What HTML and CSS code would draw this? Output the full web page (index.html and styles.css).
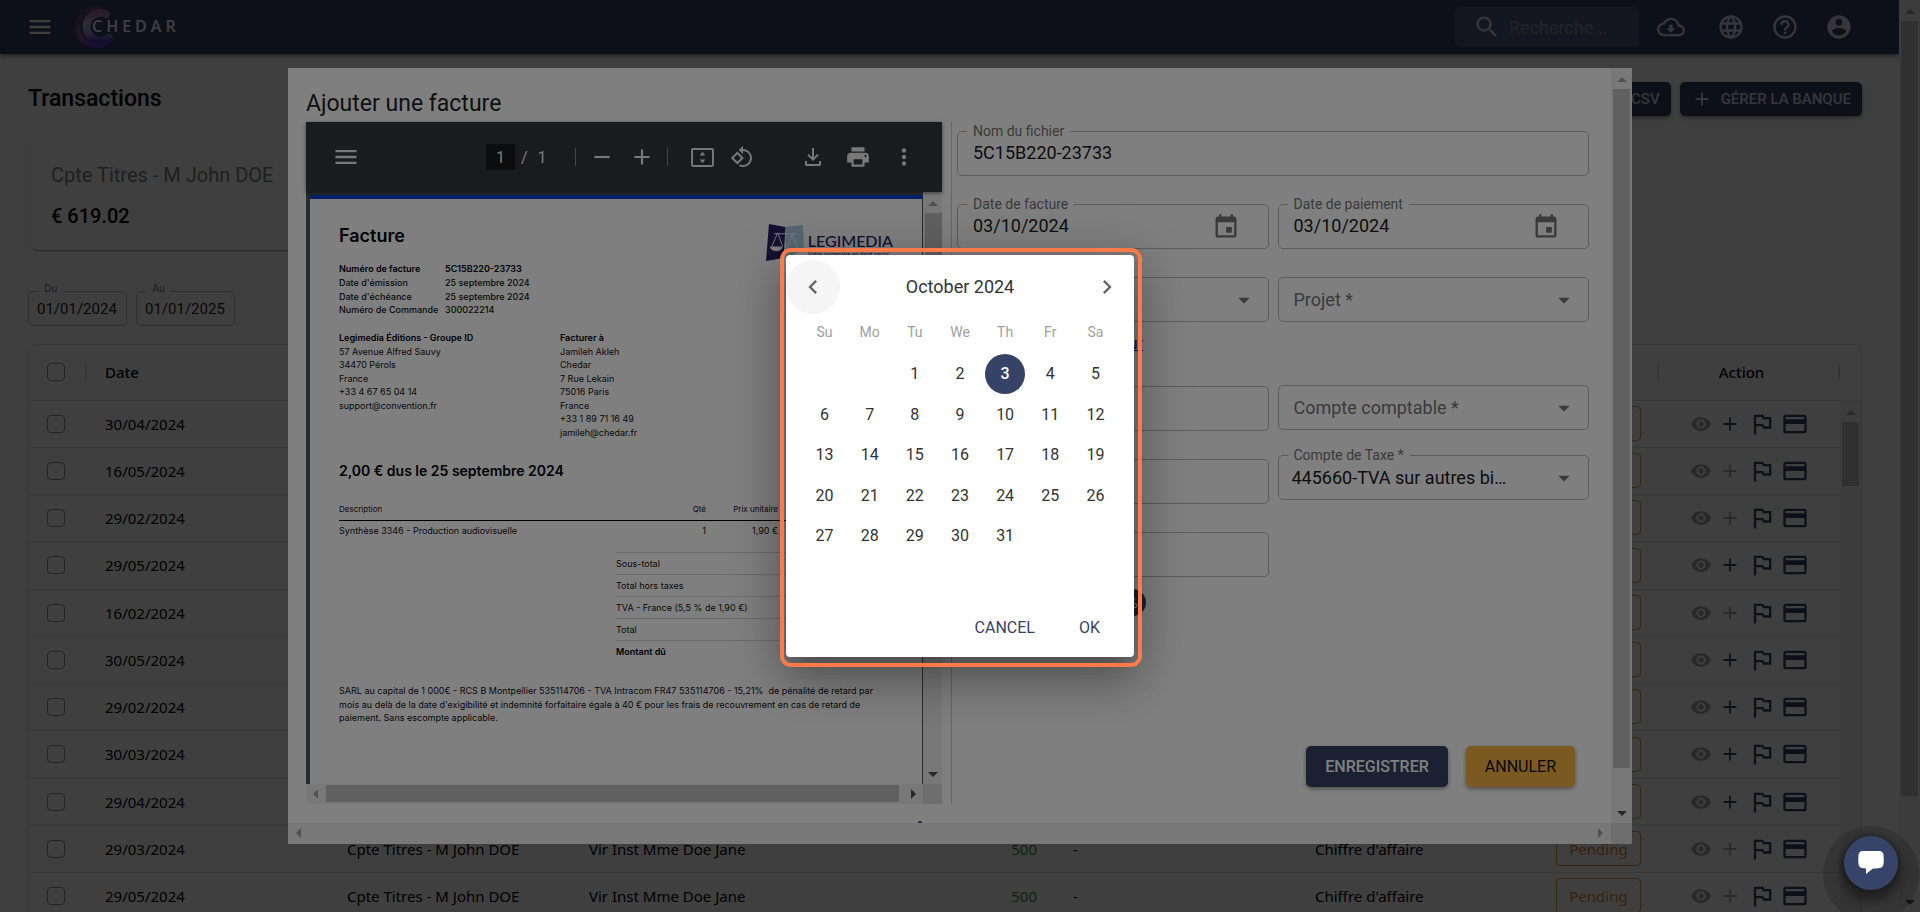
FILE: index.html
```html
<!DOCTYPE html>
<html lang="fr">
<head>
<meta charset="utf-8">
<title>Chedar - Transactions</title>
<link rel="stylesheet" href="styles.css">
</head>
<body>
<svg class="sprite" aria-hidden="true">
  <symbol id="i-menu" viewBox="0 0 24 24"><path d="M3 18h18v-2H3v2zm0-5h18v-2H3v2zm0-7v2h18V6H3z"/></symbol>
  <symbol id="i-search" viewBox="0 0 24 24"><path d="M15.5 14h-.79l-.28-.27C15.41 12.59 16 11.11 16 9.5 16 5.91 13.09 3 9.5 3S3 5.91 3 9.5 5.91 16 9.5 16c1.61 0 3.09-.59 4.23-1.57l.27.28v.79l5 4.99L20.49 19l-4.99-5zm-6 0C7.01 14 5 11.99 5 9.5S7.01 5 9.5 5 14 7.01 14 9.5 11.99 14 9.5 14z"/></symbol>
  <symbol id="i-cloud" viewBox="0 0 24 24"><path d="M19.35 10.04C18.67 6.59 15.64 4 12 4 9.11 4 6.6 5.64 5.35 8.04 2.34 8.36 0 10.91 0 14c0 3.31 2.69 6 6 6h13c2.76 0 5-2.24 5-5 0-2.64-2.05-4.78-4.65-4.96zM19 18H6c-2.21 0-4-1.79-4-4 0-2.05 1.53-3.76 3.56-3.97l1.07-.11.5-.95C8.08 7.14 9.94 6 12 6c2.62 0 4.88 1.86 5.39 4.43l.3 1.5 1.53.11c1.56.1 2.78 1.41 2.78 2.96 0 1.65-1.35 3-3 3zm-5.55-8h-2.9v3H8l4 4 4-4h-2.55z"/></symbol>
  <symbol id="i-globe" viewBox="0 0 24 24"><path d="M11.99 2C6.47 2 2 6.48 2 12s4.47 10 9.99 10C17.52 22 22 17.52 22 12S17.52 2 11.99 2zm6.93 6h-2.95c-.32-1.25-.78-2.45-1.38-3.56 1.84.63 3.37 1.91 4.33 3.56zM12 4.04c.83 1.2 1.48 2.53 1.91 3.96h-3.82c.43-1.43 1.08-2.76 1.91-3.96zM4.26 14C4.1 13.36 4 12.69 4 12s.1-1.36.26-2h3.38c-.08.66-.14 1.32-.14 2 0 .68.06 1.34.14 2H4.26zm.82 2h2.95c.32 1.25.78 2.45 1.38 3.56-1.84-.63-3.37-1.9-4.33-3.56zm2.95-8H5.08c.96-1.66 2.49-2.93 4.33-3.56C8.81 5.55 8.35 6.75 8.03 8zM12 19.96c-.83-1.2-1.48-2.53-1.91-3.96h3.82c-.43 1.43-1.08 2.76-1.91 3.96zM14.34 14H9.66c-.09-.66-.16-1.32-.16-2 0-.68.07-1.35.16-2h4.68c.09.65.16 1.32.16 2 0 .68-.07 1.34-.16 2zm.25 5.56c.6-1.11 1.06-2.31 1.38-3.56h2.95c-.96 1.65-2.49 2.93-4.33 3.56zM16.36 14c.08-.66.14-1.32.14-2 0-.68-.06-1.34-.14-2h3.38c.16.64.26 1.31.26 2s-.1 1.36-.26 2h-3.38z"/></symbol>
  <symbol id="i-help" viewBox="0 0 24 24"><path d="M11 18h2v-2h-2v2zm1-16C6.48 2 2 6.48 2 12s4.48 10 10 10 10-4.48 10-10S17.52 2 12 2zm0 18c-4.41 0-8-3.59-8-8s3.59-8 8-8 8 3.59 8 8-3.59 8-8 8zm0-14c-2.21 0-4 1.79-4 4h2c0-1.1.9-2 2-2s2 .9 2 2c0 2-3 1.75-3 5h2c0-2.25 3-2.5 3-5 0-2.21-1.79-4-4-4z"/></symbol>
  <symbol id="i-user" viewBox="0 0 24 24"><path d="M12 2C6.48 2 2 6.48 2 12s4.48 10 10 10 10-4.48 10-10S17.52 2 12 2zm0 3c1.66 0 3 1.34 3 3s-1.34 3-3 3-3-1.34-3-3 1.34-3 3-3zm0 14.2c-2.5 0-4.71-1.28-6-3.22.03-1.99 4-3.08 6-3.08 1.99 0 5.97 1.09 6 3.08-1.29 1.94-3.5 3.22-6 3.22z"/></symbol>
  <symbol id="i-plus" viewBox="0 0 24 24"><path d="M19 13h-6v6h-2v-6H5v-2h6V5h2v6h6v2z"/></symbol>
  <symbol id="i-minus" viewBox="0 0 24 24"><path d="M19 13H5v-2h14v2z"/></symbol>
  <symbol id="i-eye" viewBox="0 0 24 24"><path d="M12 4.5C7 4.5 2.73 7.61 1 12c1.73 4.39 6 7.5 11 7.5s9.27-3.11 11-7.5c-1.73-4.39-6-7.5-11-7.5zM12 17c-2.76 0-5-2.24-5-5s2.24-5 5-5 5 2.24 5 5-2.24 5-5 5zm0-8c-1.66 0-3 1.34-3 3s1.34 3 3 3 3-1.34 3-3-1.34-3-3-3z"/></symbol>
  <symbol id="i-flag" viewBox="0 0 24 24"><path d="M14 6l-1-2H5v17h2v-7h5l1 2h7V6h-6zm4 8h-4l-1-2H7V6h5l1 2h5v6z"/></symbol>
  <symbol id="i-card" viewBox="0 0 24 24"><path d="M20 4H4c-1.11 0-1.99.89-1.99 2L2 18c0 1.11.89 2 2 2h16c1.11 0 2-.89 2-2V6c0-1.11-.89-2-2-2zm0 14H4v-6h16v6zm0-10H4V6h16v2z"/></symbol>
  <symbol id="i-event" viewBox="0 0 24 24"><path d="M17 12h-5v5h5v-5zM16 1v2H8V1H6v2H5c-1.11 0-1.99.9-1.99 2L3 19c0 1.1.89 2 2 2h14c1.1 0 2-.9 2-2V5c0-1.1-.9-2-2-2h-1V1h-2zm3 18H5V8h14v11z"/></symbol>
  <symbol id="i-drop" viewBox="0 0 24 24"><path d="M7 10l5 5 5-5z"/></symbol>
  <symbol id="i-left" viewBox="0 0 24 24"><path d="M15.41 16.59L10.83 12l4.58-4.59L14 6l-6 6 6 6 1.41-1.41z"/></symbol>
  <symbol id="i-right" viewBox="0 0 24 24"><path d="M8.59 16.59L13.17 12 8.59 7.41 10 6l6 6-6 6-1.41-1.41z"/></symbol>
  <symbol id="i-fit" viewBox="0 0 24 20"><path fill-rule="evenodd" d="M2 0h20a2 2 0 0 1 2 2v16a2 2 0 0 1-2 2H2a2 2 0 0 1-2-2V2a2 2 0 0 1 2-2zm0 2v16h20V2zM12 4l3 4H9zM12 16l-3-4h6z"/></symbol>
  <symbol id="i-rotate" viewBox="0 0 24 24"><path d="M7.34 6.41L.86 12.9l6.49 6.48 6.49-6.48-6.5-6.49zM3.69 12.9l3.66-3.66L11 12.9l-3.66 3.66-3.65-3.66zm15.67-6.26C17.61 4.88 15.3 4 13 4V.76L8.76 5 13 9.24V6c1.79 0 3.58.68 4.95 2.05 2.73 2.73 2.73 7.17 0 9.9C16.58 19.32 14.79 20 13 20c-.97 0-1.94-.21-2.84-.61l-1.49 1.49C10.02 21.62 11.51 22 13 22c2.3 0 4.61-.88 6.36-2.64 3.52-3.51 3.52-9.21 0-12.72z"/></symbol>
  <symbol id="i-download" viewBox="0 0 16 18"><path d="M7 0h2v9.2l3.3-3.3 1.4 1.4L8 13 2.300 7.300l1.400-1.400L7 9.200zM0 13h2v3h12v-3h2v3.500a1.500 1.500 0 0 1-1.500 1.500h-13A1.500 1.500 0 0 1 0 16.500z"/></symbol>
  <symbol id="i-print" viewBox="0 0 24 24"><path d="M19 8H5c-1.66 0-3 1.34-3 3v6h4v4h12v-4h4v-6c0-1.66-1.34-3-3-3zm-3 11H8v-5h8v5zm3-7c-.55 0-1-.45-1-1s.45-1 1-1 1 .45 1 1-.45 1-1 1zm-1-9H6v4h12V3z"/></symbol>
  <symbol id="i-more" viewBox="0 0 24 24"><path d="M12 8c1.100 0 2-.900 2-2s-.900-2-2-2-2 .900-2 2 .900 2 2 2zm0 2c-1.100 0-2 .900-2 2s.900 2 2 2 2-.900 2-2-.900-2-2-2zm0 6c-1.100 0-2 .900-2 2s.900 2 2 2 2-.900 2-2-.900-2-2-2z"/></symbol>
</svg>

<div class="app">
  <div class="page">
    <header class="topbar">
      <button class="icon-btn" aria-label="Menu"><svg class="ic28"><use href="#i-menu"/></svg></button>
      <a class="brand" href="#" aria-label="Chedar">
        <svg class="brand-mark" viewBox="0 0 42 42">
          <defs>
            <linearGradient id="g1" x1="0" y1="0" x2="1" y2="1"><stop offset="0" stop-color="#3a3f60"/><stop offset=".4" stop-color="#8a4f9c"/><stop offset="1" stop-color="#5a3fd8"/></linearGradient>
            <linearGradient id="g2" x1="0" y1="0" x2="0" y2="1"><stop offset="0" stop-color="#a870b0"/><stop offset=".4" stop-color="#b8b4cc"/><stop offset=".75" stop-color="#9a90c8"/><stop offset="1" stop-color="#5238c8"/></linearGradient>
          </defs>
          <path d="M24 3A18 18 0 1 0 35 33" fill="none" stroke="url(#g1)" stroke-width="6" stroke-linecap="round"/>
          <path d="M32 8A14 14 0 1 0 35 32" fill="none" stroke="url(#g2)" stroke-width="8" stroke-linecap="round"/>
        </svg>
        <span class="brand-name">CHEDAR</span>
      </a>
      <label class="search"><svg class="ic28"><use href="#i-search"/></svg><input type="text" placeholder="Recherche..." aria-label="Recherche"></label>
      <nav class="tools">
        <button class="icon-btn wide" aria-label="Télécharger"><svg class="ic28"><use href="#i-cloud"/></svg></button>
        <button class="icon-btn" aria-label="Langue"><svg class="ic28"><use href="#i-globe"/></svg></button>
        <button class="icon-btn" aria-label="Aide"><svg class="ic28"><use href="#i-help"/></svg></button>
        <button class="icon-btn" aria-label="Compte"><svg class="ic28"><use href="#i-user"/></svg></button>
      </nav>
    </header>
    <main class="content">
      <div class="head-row">
        <h1>Transactions</h1>
        <div class="head-actions">
          <button class="btn">CSV</button>
          <button class="btn"><svg class="ic22"><use href="#i-plus"/></svg>GÉRER LA BANQUE</button>
        </div>
      </div>
      <section class="account"><p class="account-name">Cpte Titres - M John DOE</p><p class="account-sum">€ 619.02</p></section>
      <div class="dates">
        <div class="mini"><label for="du">Du</label><input id="du" value="01/01/2024"></div>
        <div class="mini"><label for="au">Au</label><input id="au" value="01/01/2025"></div>
      </div>
      <div class="grid-wrap">
        <table class="grid">
          <colgroup><col class="c-check"><col><col><col><col><col><col><col class="c-status"><col class="c-action"><col class="c-end"></colgroup>
          <thead><tr><th class="sep"><input type="checkbox" aria-label="Tout"></th><th>Date</th><th></th><th></th><th></th><th></th><th></th><th class="sep"></th><th class="sep act">Action</th><th></th></tr></thead>
          <tbody>
            <tr><td><input type="checkbox" aria-label="Ligne"></td><td>30/04/2024</td><td></td><td></td><td></td><td></td><td></td><td><span class="chip"></span></td><td><div class="acts"><svg class="ic22 off"><use href="#i-eye"/></svg><svg class="ic22"><use href="#i-plus"/></svg><svg class="ic28"><use href="#i-flag"/></svg><svg class="ic28"><use href="#i-card"/></svg></div></td><td></td></tr>
            <tr><td><input type="checkbox" aria-label="Ligne"></td><td>16/05/2024</td><td></td><td></td><td></td><td></td><td></td><td><span class="chip"></span></td><td><div class="acts"><svg class="ic22 off"><use href="#i-eye"/></svg><svg class="ic22 off"><use href="#i-plus"/></svg><svg class="ic28"><use href="#i-flag"/></svg><svg class="ic28"><use href="#i-card"/></svg></div></td><td></td></tr>
            <tr><td><input type="checkbox" aria-label="Ligne"></td><td>29/02/2024</td><td></td><td></td><td></td><td></td><td></td><td><span class="chip"></span></td><td><div class="acts"><svg class="ic22 off"><use href="#i-eye"/></svg><svg class="ic22 off"><use href="#i-plus"/></svg><svg class="ic28"><use href="#i-flag"/></svg><svg class="ic28"><use href="#i-card"/></svg></div></td><td></td></tr>
            <tr><td><input type="checkbox" aria-label="Ligne"></td><td>29/05/2024</td><td></td><td></td><td></td><td></td><td></td><td><span class="chip"></span></td><td><div class="acts"><svg class="ic22 off"><use href="#i-eye"/></svg><svg class="ic22"><use href="#i-plus"/></svg><svg class="ic28"><use href="#i-flag"/></svg><svg class="ic28"><use href="#i-card"/></svg></div></td><td></td></tr>
            <tr><td><input type="checkbox" aria-label="Ligne"></td><td>16/02/2024</td><td></td><td></td><td></td><td></td><td></td><td><span class="chip"></span></td><td><div class="acts"><svg class="ic22 off"><use href="#i-eye"/></svg><svg class="ic22 off"><use href="#i-plus"/></svg><svg class="ic28"><use href="#i-flag"/></svg><svg class="ic28"><use href="#i-card"/></svg></div></td><td></td></tr>
            <tr><td><input type="checkbox" aria-label="Ligne"></td><td>30/05/2024</td><td></td><td></td><td></td><td></td><td></td><td><span class="chip"></span></td><td><div class="acts"><svg class="ic22 off"><use href="#i-eye"/></svg><svg class="ic22"><use href="#i-plus"/></svg><svg class="ic28"><use href="#i-flag"/></svg><svg class="ic28"><use href="#i-card"/></svg></div></td><td></td></tr>
            <tr><td><input type="checkbox" aria-label="Ligne"></td><td>29/02/2024</td><td></td><td></td><td></td><td></td><td></td><td><span class="chip"></span></td><td><div class="acts"><svg class="ic22 off"><use href="#i-eye"/></svg><svg class="ic22"><use href="#i-plus"/></svg><svg class="ic28"><use href="#i-flag"/></svg><svg class="ic28"><use href="#i-card"/></svg></div></td><td></td></tr>
            <tr><td><input type="checkbox" aria-label="Ligne"></td><td>30/03/2024</td><td></td><td></td><td></td><td></td><td></td><td><span class="chip"></span></td><td><div class="acts"><svg class="ic22 off"><use href="#i-eye"/></svg><svg class="ic22"><use href="#i-plus"/></svg><svg class="ic28"><use href="#i-flag"/></svg><svg class="ic28"><use href="#i-card"/></svg></div></td><td></td></tr>
            <tr><td><input type="checkbox" aria-label="Ligne"></td><td>29/04/2024</td><td></td><td></td><td></td><td></td><td></td><td><span class="chip"></span></td><td><div class="acts"><svg class="ic22 off"><use href="#i-eye"/></svg><svg class="ic22"><use href="#i-plus"/></svg><svg class="ic28"><use href="#i-flag"/></svg><svg class="ic28"><use href="#i-card"/></svg></div></td><td></td></tr>
            <tr><td><input type="checkbox" aria-label="Ligne"></td><td>29/03/2024</td><td>Cpte Titres - M John DOE</td><td>Vir Inst Mme Doe Jane</td><td class="num">500</td><td>-</td><td>Chiffre d'affaire</td><td><span class="chip">Pending</span></td><td><div class="acts"><svg class="ic22 off"><use href="#i-eye"/></svg><svg class="ic22 off"><use href="#i-plus"/></svg><svg class="ic28"><use href="#i-flag"/></svg><svg class="ic28"><use href="#i-card"/></svg></div></td><td></td></tr>
            <tr><td><input type="checkbox" aria-label="Ligne"></td><td>29/05/2024</td><td>Cpte Titres - M John DOE</td><td>Vir Inst Mme Doe Jane</td><td class="num">500</td><td>-</td><td>Chiffre d'affaire</td><td><span class="chip">Pending</span></td><td><div class="acts"><svg class="ic22 off"><use href="#i-eye"/></svg><svg class="ic22 off"><use href="#i-plus"/></svg><svg class="ic28"><use href="#i-flag"/></svg><svg class="ic28"><use href="#i-card"/></svg></div></td><td></td></tr>
          </tbody>
        </table>
        <div class="vbar grid-bar"><i class="up"></i><b class="thumb short"></b></div>
      </div>
    </main>
  </div>
  <div class="vbar"><i class="up"></i><b class="thumb page-thumb"></b><i class="down"></i></div>
</div>

<div class="backdrop">
  <section class="modal" aria-label="Ajouter une facture">
    <div class="modal-main">
      <h2>Ajouter une facture</h2>
      <div class="split">
        <div class="viewer">
          <div class="vtools">
            <button class="vt-menu" aria-label="Panneau"><svg class="ic28"><use href="#i-menu"/></svg></button>
            <div class="vt-center">
              <input class="vt-page" value="1" aria-label="Page"><span class="vt-slash">/</span><span class="vt-total">1</span>
              <i class="vt-sep"></i>
              <button aria-label="Zoom arrière"><svg class="ic26"><use href="#i-minus"/></svg></button>
              <button aria-label="Zoom avant"><svg class="ic26"><use href="#i-plus"/></svg></button>
              <i class="vt-sep"></i>
              <button class="vt-fit" aria-label="Ajuster"><svg class="fit"><use href="#i-fit"/></svg></button>
              <button aria-label="Pivoter"><svg class="ic24"><use href="#i-rotate"/></svg></button>
            </div>
            <div class="vt-right">
              <button aria-label="Télécharger"><svg class="dl"><use href="#i-download"/></svg></button>
              <button aria-label="Imprimer"><svg class="ic26"><use href="#i-print"/></svg></button>
              <button aria-label="Plus"><svg class="ic26"><use href="#i-more"/></svg></button>
            </div>
          </div>
          <div class="sheet-area">
            <article class="sheet">
              <div class="sheet-head">
                <h3>Facture</h3>
                <div class="legi">
                  <svg viewBox="0 0 40 38" class="legi-mark">
                    <path d="M3 0l17 3-2 32-18 3z" fill="#2a2060"/>
                    <path d="M20 3l18-2 1 26-19 8z" fill="#a9cfe4"/>
                    <path d="M8 10h23M12 9l-6 14M12 9l5 14M27 10l-5 14M27 10l5 14" stroke="#eef" stroke-width="1" fill="none"/>
                    <path d="M4 23h13a6 4.500 0 0 1-13 0z" fill="#fff"/>
                  </svg>
                  <div><p class="legi-name">LEGIMEDIA</p><p class="legi-sub">Votre partenaire en droit social</p></div>
                </div>
              </div>
              <dl class="meta">
                <dt><b>Numéro de facture</b></dt><dd><b>5C15B220-23733</b></dd>
                <dt>Date d'émission</dt><dd>25 septembre 2024</dd>
                <dt>Date d'échéance</dt><dd>25 septembre 2024</dd>
                <dt>Numéro de Commande</dt><dd>300022214</dd>
              </dl>
              <div class="parties">
                <div><p><b>Legimedia Éditions - Groupe ID</b></p><p>57 Avenue Alfred Sauvy</p><p>34470 Pérols</p><p>France</p><p>+33 4 67 65 04 14</p><p>support@convention.fr</p></div>
                <div><p><b>Facturer à</b></p><p>Jamileh Akleh</p><p>Chedar</p><p>7 Rue Lekain</p><p>75016 Paris</p><p>France</p><p>+33 1 89 71 16 49</p><p>jamileh@chedar.fr</p></div>
              </div>
              <p class="due">2,00 € dus le 25 septembre 2024</p>
              <table class="items">
                <colgroup><col><col class="c-q"><col class="c-p"><col class="c-m"></colgroup>
                <thead><tr><th>Description</th><th class="r">Qté</th><th class="r">Prix unitaire</th><th></th></tr></thead>
                <tbody><tr><td>Synthèse 3346 - Production audiovisuelle</td><td class="r">1</td><td class="r">1,90 €</td><td></td></tr></tbody>
              </table>
              <div class="totals"><p>Sous-total</p><p>Total hors taxes</p><p>TVA - France (5,5 % de 1,90 €)</p><p>Total</p><p><b>Montant dû</b></p></div>
              <div class="legal"><p>SARL au capital de 1 000€ - RCS B Montpellier 535114706 - TVA Intracom FR47 535114706 - 15,21% &nbsp;de pénalité de retard par</p><p>mois au delà de la date d'exigibilité et indemnité forfaitaire égale à 40 € pour les frais de recouvrement en cas de retard de</p><p>paiement. Sans escompte applicable.</p></div>
            </article>
          </div>
          <div class="vbar viewer-v"><i class="up"></i><b class="thumb mid"></b><i class="down"></i></div>
          <div class="hbar"><i class="lt"></i><b class="hthumb"></b><i class="rt dark"></i></div>
          <div class="corner"></div>
        </div>
        <form class="form">
          <div class="field full"><label for="nom">Nom du fichier</label><input id="nom" value="5C15B220-23733"></div>
          <div class="cols">
            <div>
              <div class="field"><label for="df">Date de facture</label><input id="df" value="03/10/2024"><svg class="ic28 cal"><use href="#i-event"/></svg></div>
              <div class="field linked"><select aria-label="Fournisseur"><option></option></select><svg class="ic28"><use href="#i-drop"/></svg></div>
              <p class="link-row"><a class="link" href="#">ur</a></p>
              <div class="field"><input aria-label="Montant HT"></div>
              <div class="field"><input aria-label="Montant TVA"></div>
              <div class="field tight"><input aria-label="Montant TTC"></div>
              <button type="button" class="pct">%</button>
            </div>
            <div>
              <div class="field"><label for="dp">Date de paiement</label><input id="dp" value="03/10/2024"><svg class="ic28 cal"><use href="#i-event"/></svg></div>
              <div class="field tall"><select class="ph" aria-label="Projet"><option>Projet *</option></select><svg class="ic28"><use href="#i-drop"/></svg></div>
              <div class="field near"><select class="ph" aria-label="Compte comptable"><option>Compte comptable *</option></select><svg class="ic28"><use href="#i-drop"/></svg></div>
              <div class="field"><label for="tx">Compte de Taxe *</label><select id="tx" class="val"><option>445660-TVA sur autres bi…</option></select><svg class="ic28"><use href="#i-drop"/></svg></div>
            </div>
          </div>
          <div class="form-actions"><button type="button" class="big save">ENREGISTRER</button><button type="button" class="big cancel">ANNULER</button></div>
        </form>
      </div>
      <i class="peek"></i>
    </div>
    <div class="vbar"><i class="up"></i><b class="thumb modal-thumb"></b><i class="down"></i></div>
    <div class="hbar"><i class="lt"></i><i class="rt"></i></div>
    <div class="corner"></div>
  </section>
</div>

<div class="backdrop top">
  <div class="picker" role="dialog" aria-label="Choisir une date">
    <div class="pk-head">
      <button class="pk-nav hover" aria-label="Mois précédent"><svg class="ic28"><use href="#i-left"/></svg></button>
      <p>October 2024</p>
      <button class="pk-nav" aria-label="Mois suivant"><svg class="ic28"><use href="#i-right"/></svg></button>
    </div>
    <div class="pk-week"><span>Su</span><span>Mo</span><span>Tu</span><span>We</span><span>Th</span><span>Fr</span><span>Sa</span></div>
    <div class="pk-days">
      <button class="first">1</button><button>2</button><button class="on">3</button><button>4</button><button>5</button>
      <button>6</button><button>7</button><button>8</button><button>9</button><button>10</button><button>11</button><button>12</button>
      <button>13</button><button>14</button><button>15</button><button>16</button><button>17</button><button>18</button><button>19</button>
      <button>20</button><button>21</button><button>22</button><button>23</button><button>24</button><button>25</button><button>26</button>
      <button>27</button><button>28</button><button>29</button><button>30</button><button>31</button>
    </div>
    <div class="pk-actions"><button>CANCEL</button><button>OK</button></div>
  </div>
</div>

<button class="chat" aria-label="Messagerie"><svg viewBox="0 0 26 24"><path d="M4 0Q13-1 22 0Q25 .500 25.500 4Q26 9 25.500 13Q25 16.500 22 17Q18 17.500 15 17.500L8 23V17.500L4 17Q1 16.500.500 13Q0 9 .500 4Q1 .500 4 0z"/></svg></button>
</body>
</html>
```
FILE: styles.css
```css
* { box-sizing: border-box; }
body { margin: 0; height: 100vh; overflow: hidden; background: #fff; color: #000; font-family: Roboto, "Liberation Sans", sans-serif; font-size: 16px; }
h1, h2, h3, p, dl, dd { margin: 0; }
button, input, select { font: inherit; color: inherit; border: 0; padding: 0; background: none; outline: 0; appearance: none; }
button { display: inline-flex; align-items: center; justify-content: center; cursor: pointer; }
svg { display: block; fill: currentColor; flex: none; }
.sprite { position: absolute; width: 0; height: 0; }
.ic22 { width: 22px; height: 22px; }
.ic24 { width: 24px; height: 24px; }
.ic26 { width: 26px; height: 26px; }
.ic28 { width: 28px; height: 28px; }

/* page */
.app { display: grid; grid-template-columns: minmax(0, 1fr) 21px; height: 100vh; overflow: hidden; }
.page { height: 100vh; overflow: hidden; }
.topbar { display: flex; align-items: center; height: 54px; padding: 0 46px 0 26px; background: #364266; color: #fff; box-shadow: 0 2px 5px rgba(0,0,0,.5); position: relative; }
.brand { display: flex; align-items: center; margin-left: 20px; color: #fff; text-decoration: none; }
.brand-mark { width: 42px; height: 42px; }
.brand-name { margin-left: -24px; padding-bottom: 2px; font: 600 16px "Open Sans", sans-serif; letter-spacing: 4px; }
.search { display: flex; align-items: center; gap: 8px; width: 184px; height: 40px; margin-left: auto; padding-left: 18px; border-radius: 5px; background: rgba(255,255,255,.15); color: #d8dae2; }
.search input { flex: 1; min-width: 0; font-size: 18px; }
.search input::placeholder { color: #8a8f9e; opacity: 1; }
.tools { display: flex; align-items: center; gap: 26px; margin-left: 18px; color: #d8dae2; }
.tools .wide { margin-right: 6px; }
.content { padding: 28px 37px 0 28px; }
.head-row { display: flex; justify-content: space-between; align-items: flex-start; height: 58px; }
h1 { font-size: 23px; font-weight: 500; line-height: 34px; }
.head-actions { display: flex; gap: 9px; }
.btn { height: 34px; padding: 0 11px; gap: 8px; border-radius: 5px; background: #364266; color: #d8dae2; font-size: 15px; font-weight: 500; box-shadow: 0 2px 4px rgba(0,0,0,.4); }
.btn:first-child { padding-left: 60px; }
.account { width: 480px; height: 110px; margin-left: 4px; padding: 21px 19px; border-radius: 5px; box-shadow: 0 2px 1px -1px rgba(0,0,0,.3), 0 1px 3px rgba(0,0,0,.15); }
.account-name { font-size: 20px; line-height: 28px; color: #808080; }
.account-sum { margin-top: 13px; font-size: 20px; font-weight: 500; line-height: 28px; }
.dates { display: flex; gap: 9px; margin-top: 41px; }
.mini { position: relative; }
.mini input { display: block; width: 99px; height: 35px; padding: 0 8px; border: 1px solid #bbb; border-radius: 5px; font-size: 15px; color: #222; }
.mini label { position: absolute; left: 10px; top: -9px; padding: 0 6px; background: #fff; color: #808080; font-size: 11px; line-height: 14px; }

.grid-wrap { position: relative; margin-top: 18px; border: 1px solid #ddd; border-radius: 9px 9px 0 0; }
.grid { width: 100%; table-layout: fixed; border-collapse: collapse; font-family: "Noto Sans", sans-serif; font-size: 15px; }
.c-check { width: 58px; } .c-status { width: 120px; } .c-action { width: 181px; } .c-end { width: 21px; }
.grid th { height: 55px; padding: 0 18px; text-align: left; font-weight: 500; border-bottom: 1px solid #ddd; }
.grid td { height: 47px; padding: 0 18px; border-bottom: 1px solid #ddd; white-space: nowrap; }
.grid tr:nth-child(4n) td { height: 48px; }
.grid .sep { background: linear-gradient(#d4d4d4, #d4d4d4) right center / 2px 16px no-repeat; }
.grid .act { text-align: center; padding-right: 34px; }
.grid .num { text-align: right; color: #3f8f43; }
.grid td:nth-child(8) { padding: 0; }
.grid td:nth-child(9) { padding: 0 17px 0 31px; }
.grid input { display: block; width: 18px; height: 18px; margin: 0; border: 1px solid #8c8c8c; border-radius: 4px; }
.chip { display: flex; align-items: center; justify-content: center; width: 85px; height: 35px; margin-left: 17px; border: 1px solid #e0942a; border-radius: 4px; color: #d98a2b; }
.acts { display: flex; align-items: center; gap: 7px; color: #364266; }
.acts .off { color: #a6a6a6; }
.acts svg:nth-child(4) { margin-left: -2px; }

/* scrollbars */
.vbar { display: flex; flex-direction: column; align-items: center; width: 21px; background: #f1f1f1; }
.hbar { display: flex; align-items: center; justify-content: space-between; height: 21px; padding: 0 8px; background: #f1f1f1; }
.corner { background: #dcdcdc; }
.up, .down, .lt, .rt { display: block; border: 5px solid transparent; flex: none; }
.up { margin: 4px 0 7px; border-bottom-color: #a3a3a3; }
.down { margin: auto 0 2px; border-top-color: #505050; }
.lt { border-right-color: #a3a3a3; margin-left: -5px; }
.rt { border-left-color: #a3a3a3; margin-right: -5px; }
.rt.dark { border-left-color: #505050; }
.thumb { width: 17px; flex: none; background: #c1c1c1; }
.page-thumb { height: 85%; }
.grid-bar { position: absolute; right: 0; top: 56px; bottom: 0; }
.short { height: 64px; }

/* invoice modal */
.backdrop { position: fixed; inset: 0; display: flex; align-items: center; justify-content: center; background: rgba(0,0,0,.5); }
.modal { display: grid; grid-template-columns: minmax(0, 1fr) 21px; grid-template-rows: minmax(0, 1fr) 21px; width: 70vw; height: 85vh; background: #fff; }
.modal-main { display: flex; flex-direction: column; padding: 18px 22px 0 18px; }
.modal-thumb { height: 90%; }
h2 { font-size: 23px; font-weight: 400; line-height: 36px; color: #222; }
.split { display: grid; grid-template-columns: minmax(0, 636fr) minmax(0, 638fr); gap: 9px; flex: 1; min-height: 0; }
.peek { align-self: center; width: 4px; height: 2px; margin-top: 17px; margin-left: -55px; border-radius: 2px 2px 0 0; background: #364266; }
.viewer { display: grid; grid-template-columns: minmax(0, 1fr) 19px; grid-template-rows: 70px minmax(0, 1fr) 20px; min-height: 0; }
.vtools { grid-column: 1 / 3; display: flex; align-items: center; padding: 0 26px; background: #323639; color: #f1f1f1; z-index: 1; box-shadow: 0 1px 4px rgba(0,0,0,.5); }
.vt-center { display: flex; align-items: center; margin-left: 126px; }
.vt-page { width: 29px; height: 26px; background: #191b1c; text-align: center; font-size: 16px; }
.vt-slash { margin-left: 6px; }
.vt-total { margin-left: 10px; }
.vt-sep { width: 1px; height: 18px; margin: 0 14px 0 24px; background: #8a8c8e; }
.vt-total + .vt-sep { margin-left: 28px; margin-right: 13px; }
.vt-sep + button + button { margin-left: 14px; }
.vt-sep + button + button + .vt-sep { margin: 0 10px 0 12px; }
.fit { width: 23px; height: 19px; margin: 0 2px 0 13px; }
.vt-sep + .vt-fit + button { margin-left: 14px; }
.vt-right { display: flex; align-items: center; gap: 24px; margin-left: auto; margin-right: -1px; }
.vt-right button + button + button { margin-left: -4px; }
.dl { width: 16px; height: 18px; }
.sheet-area { padding: 3px 1px 0 4px; background: #525659; overflow: hidden; }
.sheet { height: 100%; padding: 25px 29px 0; border-top: 4px solid #0044d0; background: #fff; font-family: Inter, sans-serif; font-size: 9px; line-height: 14px; color: #111; white-space: nowrap; }
.sheet-head { display: flex; justify-content: space-between; align-items: flex-start; height: 38px; }
h3 { font-size: 18px; font-weight: 600; line-height: 24px; color: #000; }
.legi { display: flex; gap: 3px; }
.legi-mark { width: 39px; height: 37px; }
.legi-name { margin-top: 8px; font: 500 16px/18px Lato, sans-serif; color: #2a2060; }
.legi-sub { font: 6px/8px Lato, sans-serif; color: #2a2060; }
.meta { display: grid; grid-template-columns: 106px 1fr; height: 54px; align-content: space-between; font-weight: 500; }
.meta dt, .meta dd { line-height: 13px; }
.parties { display: grid; grid-template-columns: 221px 1fr; height: 108px; margin-top: 15px; }
.parties p:nth-child(even), .legal p:nth-child(even) { line-height: 13px; }
.sheet b { font-weight: 600; color: #000; }
.due { margin-top: 22px; font-size: 14px; font-weight: 600; line-height: 20px; color: #000; }
.items { width: 100%; margin-top: 20px; table-layout: fixed; border-collapse: collapse; }
.c-q { width: 60px; } .c-p { width: 72px; } .c-m { width: 115px; }
.items th { height: 19px; padding: 0 0 3px; border-bottom: 1px solid #000; text-align: left; font-size: 8px; font-weight: 400; line-height: 12px; }
.items td { height: 20px; padding: 0; }
.items .r { text-align: right; }
.totals { margin: 12px 0 0 50%; }
.totals p { height: 22px; line-height: 21px; border-top: 1px solid #d4d4d4; }
.legal { margin-top: 22px; }
.viewer-v { width: 19px; align-items: flex-end; }
.viewer-v .up, .viewer-v .down { margin-right: 4px; }
.mid { height: 55%; }
.viewer .hbar { height: 20px; padding: 0 7px; }
.hthumb { flex: 1; height: 17px; margin: 0 12px 0 8px; background: #c1c1c1; }

.form { display: flex; flex-direction: column; padding: 9px 0 0 5px; border-left: 1px solid #ccc; }
.field { position: relative; display: flex; align-items: center; height: 45px; margin-bottom: 28px; border: 1px solid #b8b8b8; border-radius: 5px; font-size: 18px; color: #1a1a1a; }
.field > label { position: absolute; left: 9px; top: -9px; padding: 0 6px; background: #fff; color: #757575; font-size: 14px; line-height: 16px; }
.field input, .field select { flex: 1; min-width: 0; height: 43px; padding: 0 15px 2px; }
.field svg { margin-right: 10px; color: #757575; }
.field .cal { margin-right: 28px; }
.field .ph { padding-bottom: 0; color: #757575; }
.field .val { padding: 0 0 0 13px; }
.cols { display: grid; grid-template-columns: minmax(0, 1fr) minmax(0, 1fr); gap: 9px; }
.field.linked { margin-bottom: 12px; }
.field.tall { margin-bottom: 63px; }
.field.near { margin-bottom: 25px; }
.field.tight { margin-bottom: 12px; }
.link-row { width: 186px; margin-bottom: 33px; line-height: 19px; text-align: right; }
.link { color: #0000ee; }
.pct { width: 27px; height: 27px; margin-left: 162px; border-radius: 50%; background: #364266; color: #fff; font-size: 14px; }
.form-actions { display: flex; justify-content: flex-end; gap: 18px; margin: auto 14px 17px 0; }
.big { height: 41px; padding: 0 19px; border-radius: 5px; font-size: 16px; box-shadow: 0 2px 4px rgba(0,0,0,.4); }
.save { background: #364266; color: #fff; font-weight: 500; }
.cancel { background: #f4b440; color: #111; }

/* date picker */
.picker { position: relative; width: 348px; padding-top: 5px; border-radius: 4px; background: #fff; color: #333; box-shadow: 0 12px 17px -8px rgba(0,0,0,.2), 0 27px 43px 3px rgba(0,0,0,.14), 0 10px 52px 9px rgba(0,0,0,.22); }
.picker::after { content: ""; position: absolute; inset: -7px -8px -10px -6px; border: 4px solid #ff7a48; border-radius: 11px; pointer-events: none; }
.pk-head { display: flex; align-items: center; justify-content: space-between; font-size: 18px; }
.pk-head p { padding-bottom: 2px; }
.pk-nav { width: 54px; height: 54px; border-radius: 50%; color: #666; }
.pk-nav.hover { background: #f5f5f5; }
.pk-week, .pk-days { display: grid; grid-template-columns: repeat(7, 1fr); padding: 0 16px; justify-items: center; text-align: center; }
.pk-week { font-size: 14px; line-height: 36px; height: 40px; color: #a0a0a0; }
.pk-days { height: 243px; grid-template-rows: repeat(6, 1fr); align-items: center; }
.pk-days button { width: 40px; height: 40px; padding-bottom: 1px; border-radius: 50%; }
.pk-days .first { grid-column: 3; }
.pk-days .on { background: #364266; color: #fff; font-weight: 500; }
.pk-actions { display: flex; justify-content: flex-end; gap: 44px; height: 60px; padding-right: 34px; color: #364266; }

.chat { position: fixed; right: 22px; bottom: 22px; width: 54px; height: 54px; border-radius: 50%; background: #374469; color: #fff; box-shadow: 0 0 4px 3px rgba(0,0,0,.2), 0 8px 10px 4px rgba(0,0,0,.35), 0 11px 0 21px rgba(0,0,0,.15); }
.chat svg { width: 26px; height: 24px; }
```
